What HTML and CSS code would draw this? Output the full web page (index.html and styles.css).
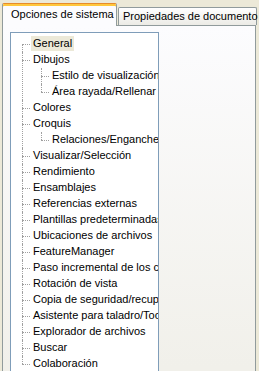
FILE: index.html
```
<!DOCTYPE html>
<html lang="es">
<head>
    <meta charset="UTF-8">
    <title>Opciones</title>
    <link rel="stylesheet" href="styles.css">
</head>
<body>
<div class="tabs">
    <div class="tab active">Opciones de sistema</div>
    <div class="tab">Propiedades de documento</div>
</div>
<div class="panel">
    <div class="tree">
        <ul class="root">
            <li><span class="label selected">General</span></li>
            <li><span class="label">Dibujos</span>
                <ul>
                    <li><span class="label">Estilo de visualización</span></li>
                    <li><span class="label">Área rayada/Rellenar</span></li>
                </ul>
            </li>
            <li><span class="label">Colores</span></li>
            <li><span class="label">Croquis</span>
                <ul>
                    <li><span class="label">Relaciones/Enganches</span></li>
                </ul>
            </li>
            <li><span class="label">Visualizar/Selección</span></li>
            <li><span class="label">Rendimiento</span></li>
            <li><span class="label">Ensamblajes</span></li>
            <li><span class="label">Referencias externas</span></li>
            <li><span class="label">Plantillas predeterminadas</span></li>
            <li><span class="label">Ubicaciones de archivos</span></li>
            <li><span class="label">FeatureManager</span></li>
            <li><span class="label">Paso incremental de los cuadros de número</span></li>
            <li><span class="label">Rotación de vista</span></li>
            <li><span class="label">Copia de seguridad/recuperación</span></li>
            <li><span class="label">Asistente para taladro/Toolbox</span></li>
            <li><span class="label">Explorador de archivos</span></li>
            <li><span class="label">Buscar</span></li>
            <li><span class="label">Colaboración</span></li>
        </ul>
    </div>
</div>
</body>
</html>
```

FILE: styles.css
```
html, body {
    margin: 0;
    height: 100%;
    overflow: hidden;
}

body {
    background: #ece9d8;
    font-family: "Liberation Sans", Arial, sans-serif;
    font-size: 11px;
    color: #000;
    padding: 0 3px 0 2px;
    box-sizing: border-box;
}

.tabs {
    display: flex;
    align-items: flex-start;
    padding-top: 3px;
    position: relative;
    z-index: 1;
}

.tab {
    box-sizing: border-box;
    margin-top: 4px;
    height: 18px;
    line-height: 16px;
    padding: 0 5px;
    border: 1px solid #919b9c;
    border-bottom: none;
    border-radius: 2px 2px 0 0;
    background: linear-gradient(#ffffff, #ecebe6);
    white-space: nowrap;
}

.tab.active {
    margin-top: 0;
    height: 23px;
    width: 115px;
    line-height: 20px;
    padding: 0 8px;
    margin-bottom: -1px;
    border-top: 1px solid #e68b2c;
    box-shadow: inset 0 2px 0 #ffc73c;
    background: #fcfcfe;
}

.tab + .tab {
    margin-left: 1px;
    width: 139px;
    padding: 0 4px;
}

.panel {
    box-sizing: border-box;
    height: 400px;
    border: 1px solid #919b9c;
    background: linear-gradient(#fcfcfe, #f1f0ea 340px);
    padding: 6px 0 0 7px;
}

.tree {
    width: 149px;
    height: 400px;
    box-sizing: border-box;
    border: 1px solid #7f9db9;
    background: #fff;
    padding-top: 3px;
    overflow: hidden;
}

.tree ul {
    list-style: none;
    margin: 0;
    padding: 0;
}

.tree ul ul {
    margin-left: -1px;
}

.tree li {
    position: relative;
    padding-left: 20px;
    white-space: nowrap;
}

.tree li::before {
    content: "";
    position: absolute;
    left: 11px;
    top: 8px;
    width: 8px;
    border-top: 1px dotted #a0a0a0;
}

.tree li::after {
    content: "";
    position: absolute;
    left: 11px;
    top: 0;
    bottom: 0;
    border-left: 1px dotted #a0a0a0;
}

.tree .root > li:first-child::after {
    top: 8px;
}

.tree li:last-child::after {
    bottom: auto;
    height: 8px;
}

.label {
    display: inline-block;
    height: 15px;
    line-height: 15px;
    margin-bottom: 1px;
    padding: 0 2px;
    vertical-align: top;
}

.label.selected {
    background: #ece9d8;
}
```
